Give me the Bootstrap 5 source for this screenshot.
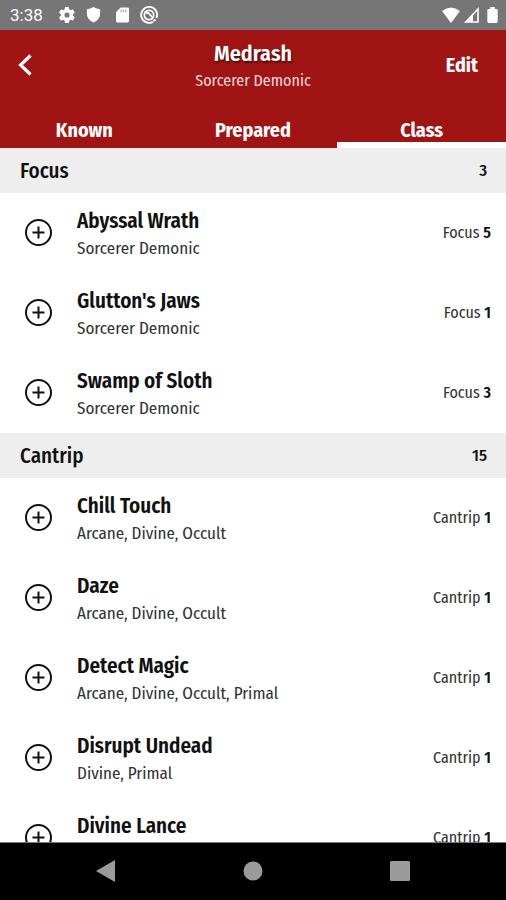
<!DOCTYPE html>
<html lang="en">
<head>
<meta charset="utf-8">
<meta name="viewport" content="width=device-width, initial-scale=1">
<title>Medrash – Spells</title>
<link href="https://cdn.jsdelivr.net/npm/bootstrap@5.3.0/dist/css/bootstrap.min.css" rel="stylesheet">
<style>
  body { font-family: "Fira Sans Condensed", "Liberation Sans Narrow", "Open Sans", sans-serif; color: #111; }
  svg { display: block; fill: currentColor; flex: none; }
  .status-bar { background: #767676; height: 30px; padding: 0 8px 0 10px; font: 17px/32px Roboto, sans-serif; }
  .status-icons { gap: 11px; }
  .app-bar { background: #a01414; }
  .title-row { display: grid; grid-template-columns: 1fr auto 1fr; height: 83px; padding-bottom: 14px; }
  .who { font-size: 22px; line-height: 28px; font-weight: 600; text-shadow: 1px 2px 2px #0008; }
  .who-class { font-size: 16px; line-height: 26px; color: #f3dada; }
  .edit-btn { font-size: 20px; line-height: 24px; }
  .tab-link { height: 35px; font-size: 20px; line-height: 34px; border-bottom: 0 solid #fff; }
  .tab-link.active { border-bottom-width: 6px; }
  .section-head { background: #eee; height: 45px; font-size: 21px; font-weight: 500; padding: 2px 19px 0 20px; }
  .section-count { font-size: 17px; }
  .spell { height: 80px; padding: 0 15px 2px 25px; gap: 25px; }
  .spell-text { padding-top: 6px; }
  .spell-name { font-size: 21px; line-height: 28px; font-weight: 600; }
  .spell-info { font-size: 17px; line-height: 28px; color: #333; }
  .spell-level { font-size: 16px; line-height: 28px; padding-top: 2px; color: #333; }
  .spell-level b { font-weight: 600; color: #111; }
  .add-btn circle, .add-btn path { fill: none; stroke: #111; stroke-width: 2; }
  .nav-keys { background: #000; color: #9b9b9b; height: 58px; border-top: 1px solid #777; padding: 0 33px 2px; }
</style>
</head>
<body class="vh-100 d-flex flex-column overflow-hidden bg-white">
  <div class="status-bar d-flex align-items-center text-white flex-shrink-0">
    <span class="me-3">3:38</span>
    <div class="status-icons d-flex align-items-center">
      <svg width="16" height="16" viewBox="2 2 20 20" aria-hidden="true"><path d="M19.4 13a7.8 7.8 0 0 0 0-2l2.1-1.6a.5.5 0 0 0 .1-.6l-2-3.5a.5.5 0 0 0-.6-.2l-2.5 1a7.5 7.5 0 0 0-1.7-1l-.4-2.6a.5.5 0 0 0-.5-.4h-4a.5.5 0 0 0-.5.4L9 5.1a7.5 7.5 0 0 0-1.7 1l-2.5-1a.5.5 0 0 0-.6.2l-2 3.5a.5.5 0 0 0 .1.6L4.4 11a7.8 7.8 0 0 0 0 2l-2.1 1.6a.5.5 0 0 0-.1.6l2 3.5c.1.2.4.3.6.2l2.5-1a7.5 7.5 0 0 0 1.7 1l.4 2.6c0 .3.2.4.5.4h4c.3 0 .5-.1.5-.4l.4-2.6a7.5 7.5 0 0 0 1.7-1l2.5 1c.2.1.5 0 .6-.2l2-3.5a.5.5 0 0 0-.1-.6zM12 15.2a3.2 3.2 0 1 1 0-6.4 3.2 3.2 0 0 1 0 6.4z"/></svg>
      <svg width="15" height="16" viewBox="0 0 15 17" aria-hidden="true"><path d="M7.5 0Q11 2 14.5 2.500V8Q14 13.500 7.500 16.500 1 13.500.5 8V2.500Q4 2 7.500 0z"/></svg>
      <svg class="ms-1" width="13" height="16" viewBox="0 0 14 16" aria-hidden="true"><path d="M5 0h7.500Q14 0 14 1.500v13Q14 16 12.500 16h-11Q0 16 0 14.500V5z"/><path d="M5.500 2v3M8 2v3M10.500 2v3" stroke="#aaa" stroke-width="1.300"/></svg>
      <svg width="18" height="18" viewBox="0 0 18 18" aria-hidden="true"><g fill="none" stroke="currentColor"><path d="M13 15.900A8 8 0 1 1 16.500 12" stroke-width="1.800"/><circle cx="9" cy="9" r="4.700" stroke-width="1.700"/><path d="m5.500 6.500 3 .5 4 4.500" stroke-width="1.800"/></g><circle cx="14.500" cy="14.200" r="1.200"/></svg>
    </div>
    <div class="d-flex align-items-center ms-auto">
      <svg width="18" height="16" viewBox="0 0 18 16" aria-hidden="true"><path d="M0 4Q9-3 18 4L9 16z"/></svg>
      <svg class="ms-1" width="15" height="16" viewBox="0 0 15 16" aria-hidden="true"><path d="M14 2v13H1.800z" fill="none" stroke="currentColor" stroke-width="1.600"/><path d="M9 7v8H1.800z"/></svg>
      <svg class="ms-2" width="11" height="16" viewBox="0 0 11 17" aria-hidden="true"><path d="M3 0h5v2h1.500Q11 2 11 3.500v12Q11 17 9.500 17h-8Q0 17 0 15.500v-12Q0 2 1.500 2H3z"/></svg>
    </div>
  </div>

  <header class="app-bar text-white flex-shrink-0">
    <div class="title-row align-items-center">
      <button type="button" class="btn p-0 ms-3 border-0 text-white me-auto" aria-label="Back"><svg width="18" height="24" viewBox="0 0 18 24" aria-hidden="true"><path d="M14.500 2.500 4.500 12l10 9.500" fill="none" stroke="currentColor" stroke-width="3.200"/></svg></button>
      <div class="text-center pt-1">
        <h1 class="who m-0">Medrash</h1>
        <div class="who-class">Sorcerer Demonic</div>
      </div>
      <button type="button" class="edit-btn btn border-0 p-0 text-white fw-bold ms-auto me-4 px-1">Edit</button>
    </div>
    <nav class="row g-0" aria-label="Spell lists">
      <a href="#known" class="tab-link col-4 text-center text-white fw-bold text-decoration-none">Known</a>
      <a href="#prepared" class="tab-link col-4 text-center text-white fw-bold text-decoration-none">Prepared</a>
      <a href="#class" class="tab-link active col-4 text-center text-white fw-bold text-decoration-none" aria-current="page">Class</a>
    </nav>
  </header>

  <main class="flex-fill overflow-hidden" id="class">
    <section>
      <h2 class="section-head d-flex align-items-center justify-content-between m-0"><span>Focus</span><span class="section-count">3</span></h2>
      <ul class="list-unstyled m-0">
        <li class="spell d-flex align-items-center"><button type="button" class="add-btn btn p-0 border-0" aria-label="Add Abyssal Wrath"><svg width="27" height="27" viewBox="0 0 27 27" aria-hidden="true"><circle cx="13.500" cy="13.500" r="12.500"/><path d="M13.500 7.500v12m-6-6h12"/></svg></button><div class="spell-text flex-fill"><div class="spell-name">Abyssal Wrath</div><div class="spell-info">Sorcerer Demonic</div></div><div class="spell-level">Focus <b>5</b></div></li>
        <li class="spell d-flex align-items-center"><button type="button" class="add-btn btn p-0 border-0" aria-label="Add Glutton's Jaws"><svg width="27" height="27" viewBox="0 0 27 27" aria-hidden="true"><circle cx="13.500" cy="13.500" r="12.500"/><path d="M13.500 7.500v12m-6-6h12"/></svg></button><div class="spell-text flex-fill"><div class="spell-name">Glutton's Jaws</div><div class="spell-info">Sorcerer Demonic</div></div><div class="spell-level">Focus <b>1</b></div></li>
        <li class="spell d-flex align-items-center"><button type="button" class="add-btn btn p-0 border-0" aria-label="Add Swamp of Sloth"><svg width="27" height="27" viewBox="0 0 27 27" aria-hidden="true"><circle cx="13.500" cy="13.500" r="12.500"/><path d="M13.500 7.500v12m-6-6h12"/></svg></button><div class="spell-text flex-fill"><div class="spell-name">Swamp of Sloth</div><div class="spell-info">Sorcerer Demonic</div></div><div class="spell-level">Focus <b>3</b></div></li>
      </ul>
    </section>
    <section>
      <h2 class="section-head d-flex align-items-center justify-content-between m-0"><span>Cantrip</span><span class="section-count">15</span></h2>
      <ul class="list-unstyled m-0">
        <li class="spell d-flex align-items-center"><button type="button" class="add-btn btn p-0 border-0" aria-label="Add Chill Touch"><svg width="27" height="27" viewBox="0 0 27 27" aria-hidden="true"><circle cx="13.500" cy="13.500" r="12.500"/><path d="M13.500 7.500v12m-6-6h12"/></svg></button><div class="spell-text flex-fill"><div class="spell-name">Chill Touch</div><div class="spell-info">Arcane, Divine, Occult</div></div><div class="spell-level">Cantrip <b>1</b></div></li>
        <li class="spell d-flex align-items-center"><button type="button" class="add-btn btn p-0 border-0" aria-label="Add Daze"><svg width="27" height="27" viewBox="0 0 27 27" aria-hidden="true"><circle cx="13.500" cy="13.500" r="12.500"/><path d="M13.500 7.500v12m-6-6h12"/></svg></button><div class="spell-text flex-fill"><div class="spell-name">Daze</div><div class="spell-info">Arcane, Divine, Occult</div></div><div class="spell-level">Cantrip <b>1</b></div></li>
        <li class="spell d-flex align-items-center"><button type="button" class="add-btn btn p-0 border-0" aria-label="Add Detect Magic"><svg width="27" height="27" viewBox="0 0 27 27" aria-hidden="true"><circle cx="13.500" cy="13.500" r="12.500"/><path d="M13.500 7.500v12m-6-6h12"/></svg></button><div class="spell-text flex-fill"><div class="spell-name">Detect Magic</div><div class="spell-info">Arcane, Divine, Occult, Primal</div></div><div class="spell-level">Cantrip <b>1</b></div></li>
        <li class="spell d-flex align-items-center"><button type="button" class="add-btn btn p-0 border-0" aria-label="Add Disrupt Undead"><svg width="27" height="27" viewBox="0 0 27 27" aria-hidden="true"><circle cx="13.500" cy="13.500" r="12.500"/><path d="M13.500 7.500v12m-6-6h12"/></svg></button><div class="spell-text flex-fill"><div class="spell-name">Disrupt Undead</div><div class="spell-info">Divine, Primal</div></div><div class="spell-level">Cantrip <b>1</b></div></li>
        <li class="spell d-flex align-items-center"><button type="button" class="add-btn btn p-0 border-0" aria-label="Add Divine Lance"><svg width="27" height="27" viewBox="0 0 27 27" aria-hidden="true"><circle cx="13.500" cy="13.500" r="12.500"/><path d="M13.500 7.500v12m-6-6h12"/></svg></button><div class="spell-text flex-fill"><div class="spell-name">Divine Lance</div><div class="spell-info">&nbsp;</div></div><div class="spell-level">Cantrip <b>1</b></div></li>
      </ul>
    </section>
  </main>

  <div class="nav-keys d-flex align-items-center justify-content-around flex-shrink-0">
    <button type="button" class="btn p-0 border-0 text-reset" aria-label="System back"><svg width="20" height="22" viewBox="0 0 20 22" aria-hidden="true"><path d="M19 0v22L0 11z"/></svg></button>
    <button type="button" class="btn p-0 border-0 text-reset" aria-label="Home"><svg width="20" height="20" viewBox="0 0 20 20" aria-hidden="true"><circle cx="10" cy="10" r="9.500"/></svg></button>
    <button type="button" class="btn p-0 border-0 text-reset" aria-label="Recent apps"><svg width="20" height="20" viewBox="0 0 20 20" aria-hidden="true"><rect width="20" height="20" rx="1.500"/></svg></button>
  </div>
<script src="https://cdn.jsdelivr.net/npm/bootstrap@5.3.0/dist/js/bootstrap.bundle.min.js"></script>
</body>
</html>
